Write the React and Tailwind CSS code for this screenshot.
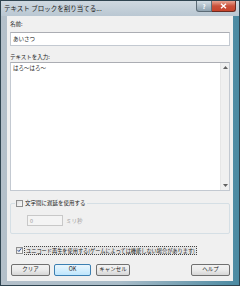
import React from 'react';

const jp = { fontFamily: '"Noto Sans CJK JP", "Noto Sans", sans-serif' };

const Check = ({ checked }) => (
  <span className="w-[7px] h-[7px] shrink-0 border border-[#8f8f8f] bg-gradient-to-br from-[#e0e0e0] to-[#fafafa] flex items-center justify-center">
    {checked && (
      <svg width="6" height="6" viewBox="0 0 6 6">
        <path d="M0.8 3.2 L2.3 4.8 L5.2 0.9" fill="none" stroke="#1c3f8c" strokeWidth="1.1" />
      </svg>
    )}
  </span>
);

const Btn = ({ children, className = '', primary }) => (
  <button
    className={`h-[12px] rounded-[2px] border text-[5.5px] leading-none flex items-center justify-center text-[#222] ${
      primary
        ? 'border-[#3c7fb1] bg-gradient-to-b from-[#eaf6fd] to-[#bee6fd]'
        : 'border-[#707070] bg-gradient-to-b from-[#f2f2f2] via-[#ebebeb] to-[#d6d6d6]'
    } ${className}`}
  >
    {children}
  </button>
);

export default function App() {
  return (
    <div
      style={jp}
      className="w-[240px] h-[286px] flex flex-col border border-[#2f4450] bg-gradient-to-r from-[#b4c0ca] via-[#a9bcc8] to-[#4a8aa2]"
    >
      {/* title bar */}
      <div className="h-[15px] flex items-start bg-gradient-to-b from-[#cfd8e0] to-[#b9c7d2]">
        <span className="pl-[3px] pt-[3px] text-[6.5px] leading-[8px] text-[#1a1a1a] whitespace-nowrap">
          テキスト ブロックを割り当てる...
        </span>
        <div className="ml-auto mr-[3px] flex">
          <div className="w-[16px] h-[11px] rounded-bl-[3px] border border-[#5c6b76] border-t-0 bg-gradient-to-b from-[#d3dde5] to-[#8fa2b0] flex items-center justify-center text-[6px] font-bold text-white">
            ?
          </div>
          <div className="w-[24px] h-[11px] rounded-br-[3px] border border-[#6b2a20] border-t-0 border-l-0 bg-gradient-to-b from-[#e8a493] via-[#c9503a] to-[#c8432b] flex items-center justify-center">
            <svg width="7" height="6" viewBox="0 0 7 6">
              <path d="M1 0.8 L6 5.2 M6 0.8 L1 5.2" stroke="#fff" strokeWidth="1.4" />
            </svg>
          </div>
        </div>
      </div>

      {/* client area */}
      <div className="ml-[6px] w-[226px] h-[265px] bg-[#f0f0f0] px-[3px] flex flex-col text-[5.5px] leading-[8px] text-[#1a1a1a]">
        <div className="pt-[4px]">名前:</div>
        <div className="mt-[4px] h-[14px] bg-white border border-[#c3c9d1] border-t-[#abadb3] pl-[2px] flex items-center">
          あいさつ
        </div>

        <div className="mt-[7px]">テキストを入力:</div>
        <div className="mt-[1px] h-[129px] bg-white border border-[#c3c9d1] border-t-[#abadb3] flex">
          <div className="flex-1 pl-[2px] pt-[1px]">はろ～はろ～</div>
          <div className="w-[9px] bg-[#f0f0f0] border-l border-[#e6e6e6] flex flex-col items-center justify-between py-[3px]">
            <svg width="5" height="3" viewBox="0 0 5 3">
              <path d="M0 3 L2.5 0 L5 3 Z" fill="#606060" />
            </svg>
            <svg width="5" height="3" viewBox="0 0 5 3">
              <path d="M0 0 L2.5 3 L5 0 Z" fill="#606060" />
            </svg>
          </div>
        </div>

        {/* delay group */}
        <div className="mt-[12px] h-[31px] border border-[#d5dfe5] rounded-[2px] flex flex-col">
          <div className="-mt-[5px] ml-[4px] px-[1px] w-fit bg-[#f0f0f0] flex items-center gap-[2px] h-[8px]">
            <Check />
            <span>文字間に遅延を使用する</span>
          </div>
          <div className="mt-[8px] ml-[16px] flex items-center">
            <div className="w-[36px] h-[11px] border border-[#c8c8c8] bg-[#f4f4f4] pl-[2px] flex items-center text-[#9a9a9a]">
              0
            </div>
            <span className="ml-[3px] text-[#a0a0a0]">ミリ秒</span>
          </div>
        </div>

        {/* unicode */}
        <div className="mt-[12px] ml-[6px] flex items-center gap-[1px] h-[8px]">
          <Check checked />
          <span className="border border-dotted border-[#444] bg-[#e4e4e4] px-[1px] text-[5.2px] leading-[7px] whitespace-nowrap">
            ユニコード再生を使用する(ゲームによっては機能しない場合があります)
          </span>
        </div>

        {/* buttons */}
        <div className="mt-[10px] flex">
          <Btn className="ml-[1px] w-[39px]">クリア</Btn>
          <Btn primary className="ml-[4px] w-[37px]">OK</Btn>
          <Btn className="ml-[5px] w-[34px]">キャンセル</Btn>
          <Btn className="ml-auto w-[39px]">ヘルプ</Btn>
        </div>
      </div>
    </div>
  );
}
